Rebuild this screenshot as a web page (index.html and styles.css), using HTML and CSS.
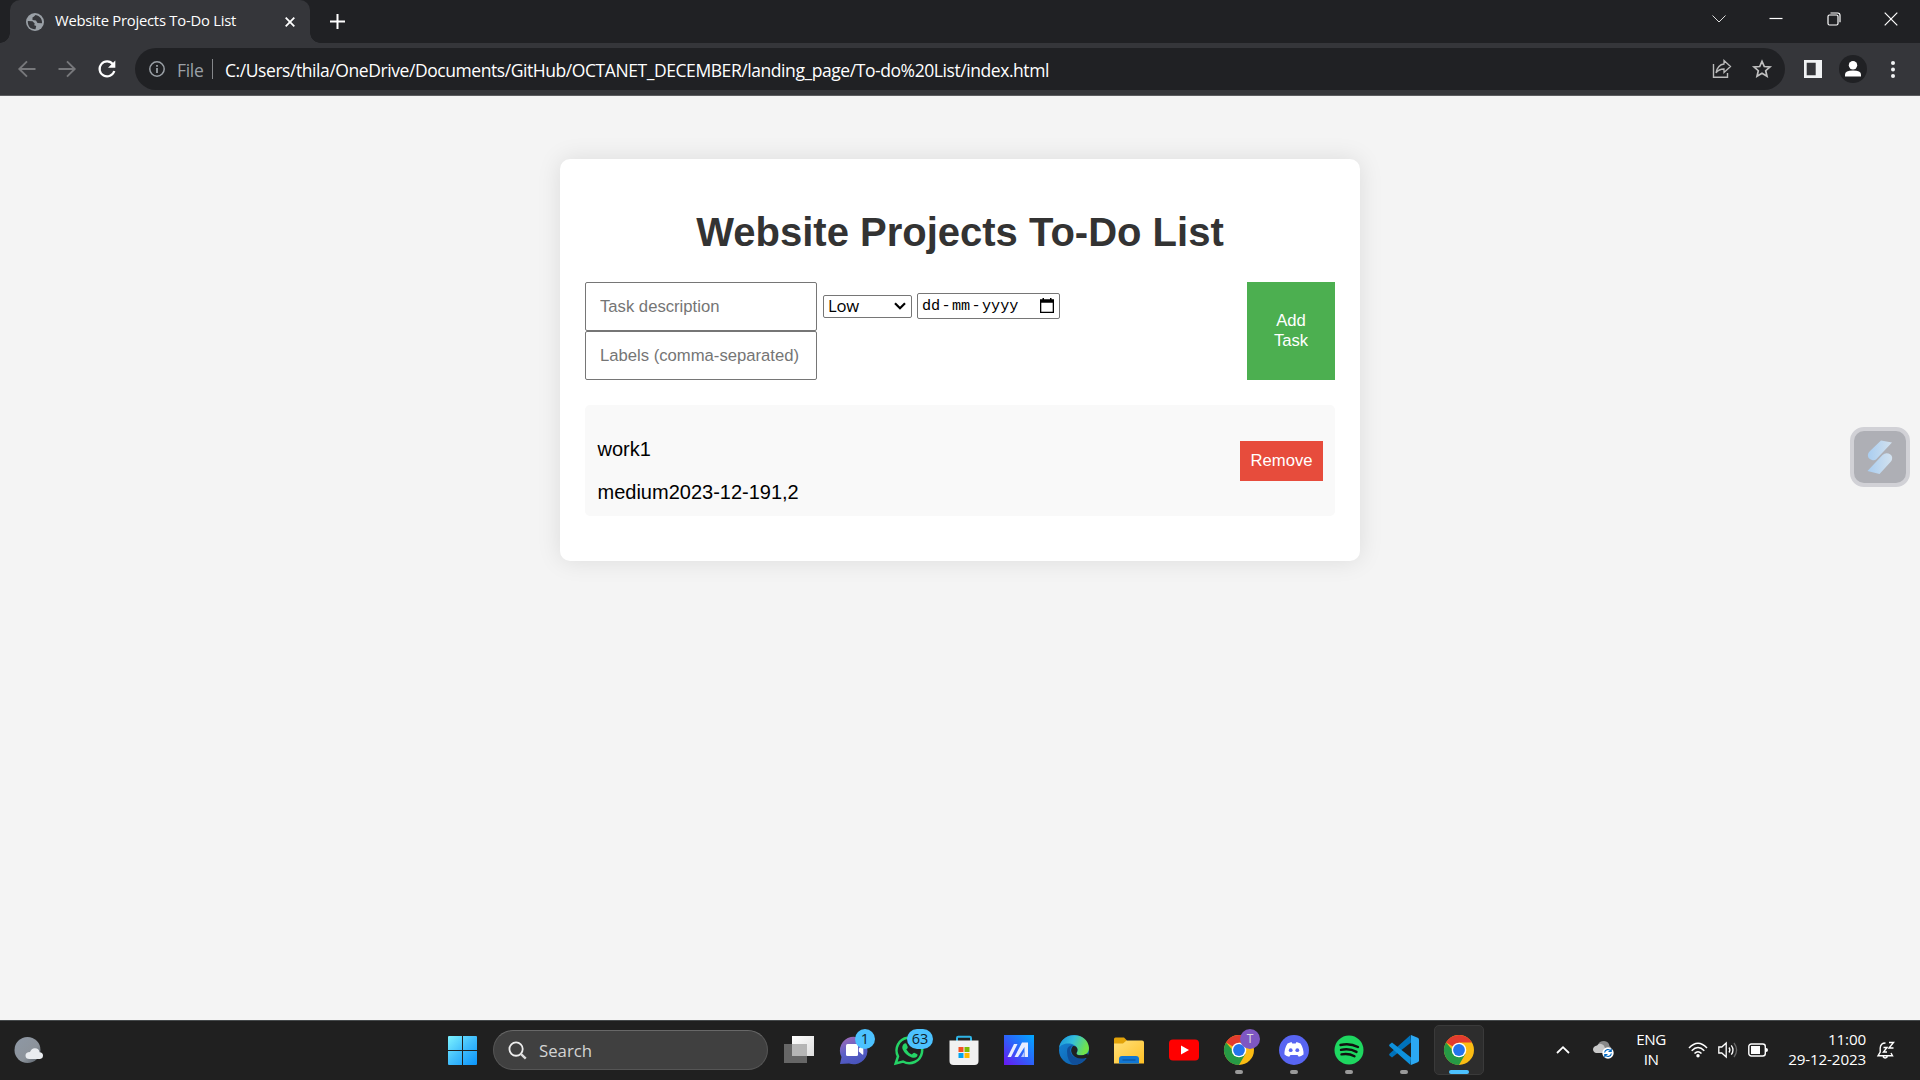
FILE: index.html
```html
<!DOCTYPE html>
<html lang="en">
<head>
<meta charset="utf-8">
<title>Website Projects To-Do List</title>
<link rel="stylesheet" href="styles.css">
</head>
<body>
<div class="desktop">
  <header class="tabstrip">
    <div class="tab">
      <svg class="tab-icon" viewBox="0 0 18 18"><circle cx="9" cy="9" r="9" fill="#9aa0a6"/><path d="M9.500 2 8 3.500l-1.500 1L6.500 7l3.500.500 1.500 2.500 4.500.3c.4-3.500-1.300-7.300-6.500-8.300zM1.800 8l4.700.2 2.200 2.300-.5 1.800 2 .7-.7 3.200C4.500 16.500 1.500 13 1.800 8z" fill="#35363a"/></svg>
      <span class="tab-title">Website Projects To-Do List</span>
      <svg class="tab-close" viewBox="0 0 10 10"><path d="M.7.7l8.600 8.600M9.300.7.7 9.300" stroke="#fff" stroke-width="1.800"/></svg>
    </div>
    <svg class="new-tab" viewBox="0 0 15 15"><path d="M7.500 0v15M0 7.500h15" stroke="#fff" stroke-width="2"/></svg>
    <div class="window-controls">
      <svg viewBox="0 0 14 14"><path d="M.5 3.500 7 10l6.500-6.500" fill="none" stroke="#ddd"/></svg>
      <svg viewBox="0 0 14 14"><path d="M.5 6.500h13" stroke="#fff" stroke-width="1.200"/></svg>
      <svg viewBox="0 0 14 14"><rect x="1" y="3" width="10" height="10" rx="1.500" fill="none" stroke="#fff" stroke-width="1.200"/><path d="M3.500 1h7.200q2.300 0 2.300 2.300v7" fill="none" stroke="#fff" stroke-width="1.200"/></svg>
      <svg viewBox="0 0 14 14"><path d="M.7.700 13.300 13.300M13.300.7.7 13.300" stroke="#fff" stroke-width="1.200"/></svg>
    </div>
  </header>

  <nav class="toolbar">
    <svg class="nav-icon" viewBox="0 0 20 20"><path d="M18.500 10H2.500M10 2.300 2.300 10l7.700 7.700" fill="none" stroke="#77787b" stroke-width="1.900"/></svg>
    <svg class="nav-icon" viewBox="0 0 20 20"><path d="M1.500 10h16M10 2.300l7.700 7.700-7.700 7.700" fill="none" stroke="#77787b" stroke-width="1.900"/></svg>
    <svg class="nav-icon" viewBox="0 0 20 20"><path d="M16 5.300A7.500 7.500 0 1 0 17.300 12" fill="none" stroke="#fff" stroke-width="2.200"/><path d="M18.300 1.500v7.300H11z" fill="#fff"/></svg>
    <div class="omnibox">
      <svg class="info" viewBox="0 0 16 16"><circle cx="8" cy="8" r="7.200" fill="none" stroke="#9aa0a6" stroke-width="1.500"/><path d="M8 7v5M8 4v1.800" stroke="#9aa0a6" stroke-width="1.800"/></svg>
      <span class="scheme">File</span>
      <span class="divider"></span>
      <span class="url">C:/Users/thila/OneDrive/Documents/GitHub/OCTANET_DECEMBER/landing_page/To-do%20List/index.html</span>
      <svg class="share" viewBox="0 0 20 20"><path d="M1.500 5v13.200h14V14" fill="none" stroke="#bbb" stroke-width="1.400"/><path d="M12 5V1.500l6.500 6-6.500 6V10c-4 0-6 1-8 3.800C5 9 7.500 5.500 12 5z" fill="none" stroke="#bbb" stroke-width="1.300"/></svg>
      <svg class="star" viewBox="0 0 20 20"><path d="m10 2.300 2.300 5.200 5.700.5-4.300 3.700 1.300 5.600-5-3-5 3 1.300-5.600L2 8l5.700-.5z" fill="none" stroke="#c0c0c0" stroke-width="1.700"/></svg>
    </div>
    <svg class="side-panel" viewBox="0 0 18 18"><path fill="#f1f3f4" fill-rule="evenodd" d="M0 0h18v18H0zM2.700 2.700v12.600h9V2.700z"/></svg>
    <svg class="profile" viewBox="0 0 28 28"><circle cx="14" cy="14" r="14" fill="#202124"/><circle cx="14" cy="10.200" r="4.200" fill="#fff"/><path d="M6 21.500v-2q0-4 8-4t8 4v2z" fill="#fff"/></svg>
    <svg class="kebab" viewBox="0 0 4 17"><circle cx="2" cy="2" r="2" fill="#f1f3f4"/><circle cx="2" cy="8.500" r="2" fill="#f1f3f4"/><circle cx="2" cy="15" r="2" fill="#f1f3f4"/></svg>
  </nav>

  <main class="page">
    <section class="card">
      <h1 class="heading">Website Projects To-Do List</h1>
      <form class="task-form">
        <div class="fields">
          <div class="field-row">
            <input class="text-input" type="text" placeholder="Task description">
            <div class="select"><span>Low</span><svg viewBox="0 0 12 8"><path d="m1 1.200 5 5 5-5" fill="none" stroke="#000" stroke-width="2.200"/></svg></div>
            <div class="date"><span class="date-text"><span>dd</span><span>-</span><span>mm</span><span>-</span><span>yyyy</span></span><svg viewBox="0 0 14 15"><path fill-rule="evenodd" d="M2.500 0h1.500v1.200h6V0h1.500v1.200H14V15H0V1.200h2.500zM1.300 4.800v8.900h11.400V4.800z"/></svg></div>
          </div>
          <input class="text-input" type="text" placeholder="Labels (comma-separated)">
        </div>
        <button class="add-button" type="button">Add<br>Task</button>
      </form>
      <div class="task">
        <div class="task-info">
          <p>work1</p>
          <p class="task-meta">medium2023-12-191,2</p>
        </div>
        <button class="remove-button" type="button">Remove</button>
      </div>
    </section>
    <div class="floating">
      <svg viewBox="0 0 26 34"><defs><linearGradient id="fl" x1="0" x2="1"><stop offset="0" stop-color="#a9cdf0"/><stop offset="1" stop-color="#d3e2ef"/></linearGradient></defs><path d="M14 .5 25 2.500 9 19.500q-1.500 1.200-4 .5-5-1.500-4-6 .5-1.500 2-3zM.5 31l15-16q2.500-2.500 6-1.500 4.500 1.500 3.500 6-.5 1.500-1.500 2.500L12.500 34z" fill="url(#fl)"/></svg>
    </div>
  </main>

  <footer class="taskbar">
    <svg class="weather" viewBox="0 0 30 28"><defs><linearGradient id="moon" x2="1" y2="1"><stop stop-color="#8e98a5"/><stop offset=".6" stop-color="#8c939b"/><stop offset="1" stop-color="#555d66"/></linearGradient></defs><circle cx="13.500" cy="14" r="13" fill="url(#moon)"/><path d="M15.500 23q-4 0-4-3.500t4.500-3.500q1.500-4 5-3.800 4 .2 4.500 4 3.500.3 3.500 3.300T26 23z" fill="#e9ecf0"/></svg>

    <div class="apps">
      <svg class="start" viewBox="0 0 29 29"><defs><linearGradient id="win" x2="1" y2="1"><stop stop-color="#7df3ff"/><stop offset=".5" stop-color="#40bdfc"/><stop offset="1" stop-color="#0a94fb"/></linearGradient></defs><path d="M0 1q0-1 1-1h13v14H0zM15 0h13q1 0 1 1v13H15zM0 15h14v14H1q-1 0-1-1zM15 15h14v13q0 1-1 1H15z" fill="url(#win)"/></svg>
      <div class="search"><svg viewBox="0 0 20 20"><circle cx="8.500" cy="8.500" r="7" fill="none" stroke="#eee" stroke-width="1.900"/><path d="m13.500 13.500 5.200 5" stroke="#ddd" stroke-width="2.500"/></svg><span>Search</span></div>

      <div class="app"><svg viewBox="0 0 30 30"><defs><linearGradient id="tv" x2="1" y2="1"><stop stop-color="#fff"/><stop offset="1" stop-color="#ddd"/></linearGradient></defs><path d="M8 1h22v20H8z" fill="url(#tv)"/><path d="M0 9h23v19H0z" fill="#666"/><path d="M8 9h15v12H8z" fill="#b5b5b5"/></svg></div>
      <div class="app"><svg viewBox="0 0 30 30"><defs><linearGradient id="chat" x2=".4" y2="1"><stop stop-color="#a86cb5"/><stop offset=".6" stop-color="#5b5fc7"/><stop offset="1" stop-color="#4a55bd"/></linearGradient></defs><path d="M1 29 2.500 22A13.800 13.800 0 1 1 10 28.500z" fill="url(#chat)"/><rect x="7" y="9" width="12" height="12" rx="1.500" fill="#fff"/><path d="m19.800 13.500 3.500-3q1-.3 1 .5v8q0 1-1 .5l-3.500-3z" fill="#fff"/></svg><span class="badge">1</span></div>
      <div class="app"><svg viewBox="0 0 30 30"><path d="M1.700 28.500 4 21.300A12.800 12.800 0 1 1 9 26.500z" fill="none" stroke="#25d366" stroke-width="2.500"/><path d="M10.500 8.500q1.500-.7 2 .5l1.300 3q.2 1-1.500 2.500 2 3.500 5.500 5 1.700-2 2.500-1.800l3 1.500q.8.600-.5 2.600-1.800 1.700-5 .6Q11 20 8.500 14q-1-3.500 2-5.500z" fill="#25d366"/></svg><span class="badge badge-wide">63</span></div>
      <div class="app"><svg viewBox="0 0 30 30"><path d="M8 7V3q0-1.200 1.200-1.200h11.600Q22 1.800 22 3v4" fill="none" stroke="#2fb4e5" stroke-width="2"/><path d="M.5 5.500h29V26q0 4-4 4h-21q-4 0-4-4z" fill="#f1f1f1"/><path d="M9.500 12h5v5h-5z" fill="#f25022"/><path d="M15.500 12h5v5h-5z" fill="#7fba00"/><path d="M9.500 18h5v5h-5z" fill="#00a4ef"/><path d="M15.500 18h5v5h-5z" fill="#ffb900"/></svg></div>
      <div class="app"><svg viewBox="0 0 30 30"><defs><linearGradient id="as" x1="0" y1="1" x2="1" y2="0"><stop stop-color="#6a16f2"/><stop offset=".5" stop-color="#2d62fa"/><stop offset="1" stop-color="#00aaff"/></linearGradient></defs><path d="M0 0h30v30H0z" fill="url(#as)"/><path d="M3.500 22 10 9h3.500L7 22zM10.500 22 18 7.500h6V22h-3.500V12l-6.500 10z" fill="#e8edff"/><path d="m17 22 3-5v5z" fill="#b4c8ff"/></svg></div>
      <div class="app"><svg viewBox="0 0 30 30"><defs><linearGradient id="ed" x2="1" y2=".3"><stop stop-color="#1690dc"/><stop offset=".5" stop-color="#34bfdb"/><stop offset="1" stop-color="#70e34a"/></linearGradient><linearGradient id="ed2" y2="1"><stop stop-color="#1687d8"/><stop offset="1" stop-color="#0c59a4"/></linearGradient></defs><circle cx="15" cy="15" r="15" fill="url(#ed2)"/><path d="M0 13C2-4 29-4 30 13c0 6-5 8-10 7-2-.3-3-1-2.500-2 2-2 1-6-2.500-8C9.500 7 2 9 0 13z" fill="url(#ed)"/><path d="M8 16q0-5 6-6-5 4-1 10 4 5 14 2.500-5 8-12 7.500-7-3-7-14z" fill="#104f9a"/><path d="M17.500 18c-.5 2.500 5 3.500 11 .5L29.500 23l-3 0q-9 2-13-3.500-3-4.500.500-8.500 3.500-.5 4.500 3 .2 2-1 4z" fill="#202020"/></svg></div>
      <div class="app"><svg viewBox="0 0 30 30"><defs><linearGradient id="fo" y2="1"><stop stop-color="#ffe07a"/><stop offset="1" stop-color="#ffc025"/></linearGradient></defs><path d="M0 4q0-1.500 1.500-1.500H10l3 3V10H0z" fill="#e3a309"/><path d="M0 8.500h9l3.500-3H28q2 0 2 2v21H0z" fill="url(#fo)"/><path d="M5 28.500V24q0-3 3-3h14q3 0 3 3v4.500z" fill="#1177d4"/><path d="M8.500 25h13" stroke="#0a4c91"/></svg></div>
      <div class="app"><svg viewBox="0 0 30 30"><rect y="4.500" width="30" height="21" rx="4" fill="#f00"/><path d="m12 10.500 8 4.500-8 4.500z" fill="#fff"/></svg></div>
      <div class="app"><svg viewBox="0 0 30 30"><use href="#chrome"/></svg><span class="badge badge-user">T</span><i class="dot"></i></div>
      <div class="app"><svg viewBox="0 0 30 30"><circle cx="15" cy="15" r="15" fill="#5865f2"/><path d="m8.500 8.500 4-1.500.8 1.500h3.400l.8-1.500 4 1.500q3.300 5 3 11-2.500 2-4.700 2.300L18.500 20h-7l-1.300 1.800Q7.500 21.300 5.500 19.500q-.3-6 3-11z" fill="#fff"/><circle cx="11.700" cy="15.200" r="1.900" fill="#5865f2"/><circle cx="18.300" cy="15.200" r="1.900" fill="#5865f2"/></svg><i class="dot"></i></div>
      <div class="app"><svg viewBox="0 0 30 30"><circle cx="15" cy="15" r="14.500" fill="#1ed760"/><path d="M6.500 10q9.500-2.200 17.500 2M7 14.900q8.500-1.900 15.500 2M7.500 19.400q7-1.500 13 1.800" fill="none" stroke="#111" stroke-width="2.400" stroke-linecap="round"/></svg><i class="dot"></i></div>
      <div class="app"><svg viewBox="0 0 30 30"><path d="M22 7.500 3 22.500.500 20.500q-.8-1 0-1.700L21.500 0z" fill="#0072bb"/><path d="M22 22.500 3 7.500.500 9.500q-.8 1 0 1.700L21.500 30z" fill="#0e91dc"/><path d="m22 0 6.700 2.800q1.300.6 1.300 2v20.400q0 1.400-1.300 2L22 30z" fill="#2ba8f3"/></svg><i class="dot"></i></div>
      <div class="app app-active"><svg viewBox="0 0 30 30"><g id="chrome"><circle cx="15" cy="15" r="15" fill="#fbbc13"/><path d="M15 15 2 7.500A15 15 0 0 1 28 7.500H15z" fill="#e33b2e"/><path d="M2 7.500A15 15 0 0 0 15 30l6.500-11.300L15 15H8.500z" fill="#269a45"/><circle cx="15" cy="15" r="7.300" fill="#fff"/><circle cx="15" cy="15" r="5.900" fill="#2374ec"/></g></svg><i class="dot dot-active"></i></div>
    </div>

    <div class="tray">
      <svg class="chevron" viewBox="0 0 14 8"><path d="m1 7 6-5.800L13 7" fill="none" stroke="#fff" stroke-width="1.800"/></svg>
      <svg class="cloud" viewBox="0 0 21 20"><path d="M5 5q1-4 6-4 5 .5 5.500 5 2 1 2 4l-8 2z" fill="#888"/><path d="M3 13q-3-1-3-4 .5-3 4-3.500 2-3 5.500-1 3 1.500 3 8.500z" fill="#c8c8c8"/><circle cx="15" cy="13" r="5.700" fill="#fff"/><path d="M11.600 12.500a3.500 3.500 0 0 1 6.300-1.500M18.400 13.500a3.500 3.500 0 0 1-6.300 1.500M18.200 8.700v2.700h-2.700M11.800 17.300v-2.700h2.700" fill="none" stroke="#0067c0" stroke-width="1.200"/></svg>
      <div class="lang"><span>ENG</span><span>IN</span></div>
      <svg class="wifi" viewBox="0 0 20 16"><path d="M1 6q9-9.500 18 0M3.700 8.800q6.300-6.500 12.600 0M6.500 11.500q3.500-3.600 7 0" fill="none" stroke="#fff" stroke-width="1.500"/><circle cx="10" cy="13.700" r="1.700" fill="#fff"/></svg>
      <svg class="sound" viewBox="0 0 20 18"><path d="M.8 6h3L8.200 2v14l-4.400-4h-3z" fill="none" stroke="#fff" stroke-width="1.300"/><path d="M11 6.500q1.800 2.500 0 5M13.300 4.300q3.400 4.700 0 9.400" fill="none" stroke="#fff" stroke-width="1.300"/><path d="M16 2q5.200 7 0 14" fill="none" stroke="#666" stroke-width="1.300"/></svg>
      <svg class="battery" viewBox="0 0 20 14"><rect x=".8" y="1" width="16.500" height="12" rx="2.500" fill="none" stroke="#fff" stroke-width="1.400"/><path d="M3 3h9v8H3zM18 5q2 0 2 2t-2 2z" fill="#fff"/></svg>
      <div class="clock"><span>11:00</span><span class="clock-date">29-12-2023</span></div>
      <svg class="bell" viewBox="0 0 18 19"><path d="M8.500 2Q3.500 2 3.200 7v4L1 14.800h14.500L14 12M6 15.500q2 3 4.500 0" fill="none" stroke="#fff" stroke-width="1.400"/><path d="M6.500 6.500H10L6.500 11H10M12 1.500h4.500L12 7h4.500" fill="none" stroke="#fff" stroke-width="1.400"/></svg>
    </div>
  </footer>
</div>
</body>
</html>
```
FILE: styles.css
```css
* { box-sizing: border-box; }
body { margin: 0; font-family: "Open Sans", "Noto Sans", sans-serif; }
svg { display: block; flex: none; overflow: visible; }

.desktop { width: 1920px; height: 1080px; display: flex; flex-direction: column; overflow: hidden; }

/* Tab strip */
.tabstrip { height: 43px; background: #202124; display: flex; padding-left: 10px; }
.tab { width: 300px; height: 43px; background: #35363a; border-radius: 10px 10px 0 0; display: flex; align-items: center; padding: 0 15px 0 16px; position: relative; }
.tab::before, .tab::after { content: ""; position: absolute; bottom: 0; width: 10px; height: 10px; }
.tab::before { left: -10px; background: radial-gradient(circle at 0 0, #202124 9.5px, #35363a 10px); }
.tab::after { right: -10px; background: radial-gradient(circle at 100% 0, #202124 9.5px, #35363a 10px); }
.tab-icon { width: 18px; height: 18px; }
.tab-title { margin-left: 11px; flex: 1; color: #fff; font-size: 14.8px; letter-spacing: -0.24px; white-space: nowrap; line-height: 20px; padding-bottom: 3px; }
.tab-close { width: 10px; height: 10px; }
.new-tab { width: 15px; height: 15px; margin: 14px 0 0 20px; }
.window-controls { margin: 12px 22px 0 auto; display: flex; gap: 43.300px; }
.window-controls svg { width: 14px; height: 14px; }

/* Toolbar */
.toolbar { height: 53px; background: #35363a; border-bottom: 1px solid #5b5c5f; display: flex; align-items: center; padding-left: 17px; }
.nav-icon { width: 20px; height: 20px; margin-right: 20px; }
.omnibox { width: 1650px; height: 42px; margin-left: -2px; border-radius: 21px; background: #202124; display: flex; align-items: center; padding: 0 13px 0 14px; font-size: 17.5px; line-height: 24px; white-space: nowrap; }
.info { width: 16px; height: 16px; margin-right: 12px; }
.scheme { color: #9aa0a6; width: 35px; padding-top: 1px; letter-spacing: -0.3px; }
.divider { width: 1px; height: 20px; background: #85878a; margin-right: 12px; }
.url { color: #fff; flex: 1; letter-spacing: -0.430px; padding-top: 1px; }
.share { width: 20px; height: 20px; margin-right: 20px; }
.star { width: 20px; height: 20px; }
.side-panel { width: 18px; height: 18px; margin-left: 19px; }
.profile { width: 28px; height: 28px; margin-left: 17px; }
.kebab { width: 4px; height: 17px; margin-left: 24px; }

/* Page */
.page { flex: 1; background: #f4f4f4; display: flex; justify-content: center; align-items: flex-start; padding-top: 63px; position: relative; font-family: "Liberation Sans", Arial, sans-serif; }
.card { width: 800px; height: 402px; background: #fff; border-radius: 10px; box-shadow: 0 0 25px rgba(0, 0, 0, .1); padding: 50px 25px 0; }
.heading { margin: 0 0 27px; font-size: 40px; line-height: 46px; text-align: center; color: #333; white-space: nowrap; }
.task-form { display: flex; justify-content: space-between; height: 98px; }
.field-row { display: flex; align-items: center; gap: 6px; }
.text-input { display: block; width: 232px; height: 49px; padding: 0 14px; border: 1px solid #767676; border-radius: 2px; font: 16.670px "Liberation Sans", Arial, sans-serif; background: #fff; }
.text-input::placeholder { color: #757575; }
.select { width: 89px; height: 23px; margin-bottom: 1px; border: 1px solid #767676; border-radius: 2px; display: flex; align-items: center; justify-content: space-between; padding: 0 5px 0 4px; font: 16.670px/20px "Open Sans", sans-serif; letter-spacing: -0.2px; }
.select span { margin-top: -1px; }
.select svg { width: 12px; height: 8px; }
.date { width: 143px; height: 26px; margin: 0 0 2px -1px; border: 1px solid #767676; border-radius: 2px; display: flex; align-items: center; justify-content: space-between; padding: 0 5px 0 4px; font: 15.200px/18px "Liberation Mono", monospace; }
.date-text { display: flex; gap: 1.300px; padding-top: 1px; }
.date svg { width: 14px; height: 15px; }
.add-button { width: 88px; height: 98px; border: 0; padding: 0; background: #4caf50; color: #fff; font: 16.670px/20px "Liberation Sans", Arial, sans-serif; }
.task { height: 111px; margin-top: 25px; padding: 0 12px 0 12.500px; border-radius: 5px; background: #f9f9f9; display: flex; align-items: center; justify-content: space-between; }
.task-info { font-size: 20px; line-height: 23px; align-self: flex-start; padding-top: 33px; }
.task-info p { margin: 0; }
.task-info .task-meta { margin-top: 20px; }
.remove-button { width: 83px; height: 40px; border: 0; padding: 0; background: #e74c3c; color: #fff; font: 16.670px "Liberation Sans", Arial, sans-serif; }
.floating { position: absolute; top: 331px; right: 10px; width: 60px; height: 60px; border: 4px solid #d1d1d6; border-radius: 14px; background: #aeafb5; display: flex; align-items: center; justify-content: center; }
.floating svg { width: 26px; height: 34px; }

/* Taskbar */
.taskbar { height: 60px; background: #202020; border-top: 1px solid #45494b; padding-bottom: 1px; display: flex; align-items: center; color: #fff; }
.weather { width: 30px; height: 28px; margin-left: 14px; }
.apps { display: flex; align-items: center; margin-left: 404px; }
.start { width: 29px; height: 29px; }
.search { width: 275px; height: 40px; margin: 0 11px 0 16px; border: 1px solid #555; border-top-color: #686868; border-radius: 20px; background: #404040; display: flex; align-items: center; padding-left: 14px; gap: 12px; font-size: 16.800px; color: #d4d4d4; }
.search svg { width: 19px; height: 19px; }
.app { width: 50px; height: 50px; margin-right: 5px; display: flex; align-items: center; justify-content: center; position: relative; border-radius: 5px; }
.search + .app { margin-left: -5px; }
.app svg { width: 30px; height: 30px; }
.app-active { background: #2d2d2d; border: 1px solid #3a3a3a; margin-right: 0; }
.badge { position: absolute; left: 26px; top: 4px; width: 20px; height: 20px; border-radius: 10px; background: #4cc2ff; color: #10242e; font-size: 14.500px; line-height: 20px; text-align: center; }
.badge-wide { left: 23px; width: 26px; }
.badge-user { background: #7e57c2; color: #ddd; font-size: 12px; }
.dot { position: absolute; left: 21px; bottom: 1px; width: 8px; height: 4px; border-radius: 2px; background: #9a9a9a; }
.dot-active { left: 14px; bottom: 0; width: 20px; background: #4cc2ff; }

.tray { margin-left: auto; display: flex; align-items: center; padding-right: 25px; font-size: 15.200px; line-height: 20px; }
.chevron { width: 14px; height: 8px; margin-right: 23px; }
.cloud { width: 21px; height: 20px; margin-right: 22px; }
.lang { width: 30px; margin: -2px 22px 0 0; display: flex; flex-direction: column; align-items: center; letter-spacing: -0.5px; }
.wifi { width: 20px; height: 16px; margin-right: 10px; }
.sound { width: 20px; height: 18px; margin-right: 10px; }
.battery { width: 20px; height: 14px; margin-right: 20px; }
.clock { width: 78px; margin: -2px 11px 0 0; display: flex; flex-direction: column; align-items: flex-end; letter-spacing: -0.15px; white-space: nowrap; }
.bell { width: 18px; height: 19px; }
```
